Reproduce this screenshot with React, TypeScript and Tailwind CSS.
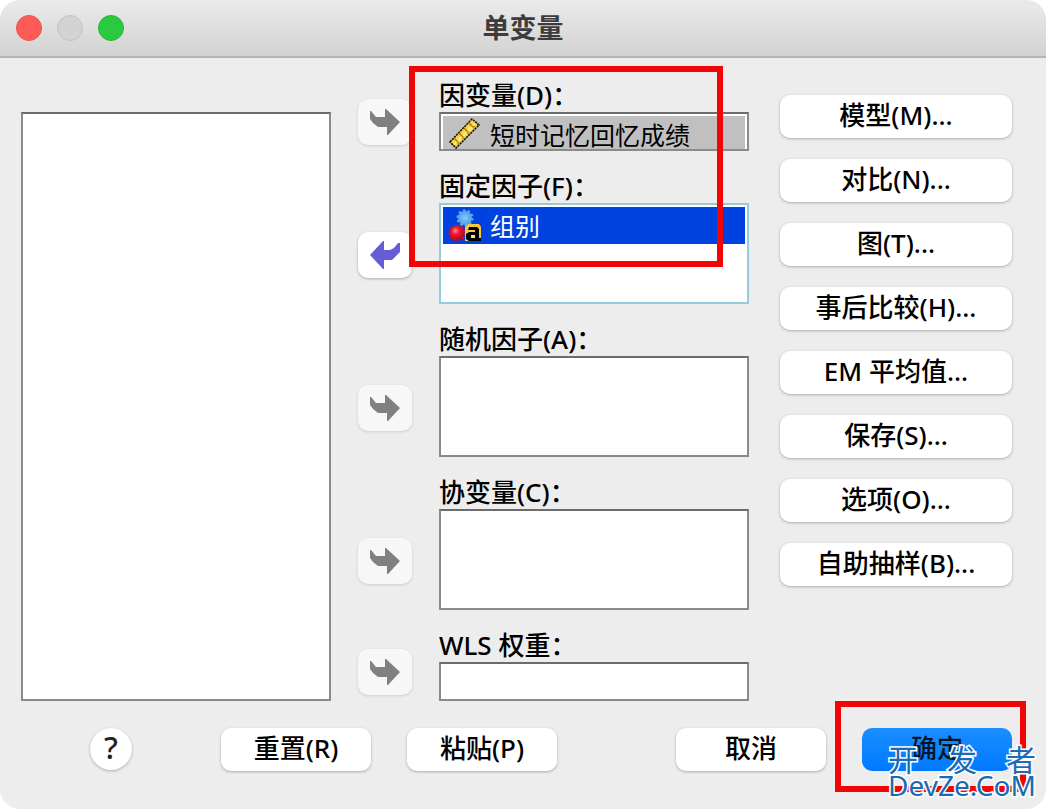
import type { ReactNode } from 'react';

const pushButton =
  'rounded-[10px] bg-white text-[26px] font-medium leading-8 text-black shadow-[0_1px_3px_rgba(0,0,0,0.28)]';
const field = 'border-2 border-[#8a8a8a] border-t-[#6c6c6c] bg-white outline-none';

function TransferButton({ label, active = false, low = false }: { label: string; active?: boolean; low?: boolean }) {
  return (
    <button
      type="button"
      aria-label={label}
      disabled={!active}
      className={`flex h-[46px] w-[54px] shrink-0 items-center justify-center self-end rounded-[10px] ${
        active ? 'bg-white shadow-[0_1px_3px_rgba(0,0,0,0.28)]' : 'bg-[#f7f7f7] shadow-[0_1px_3px_rgba(0,0,0,0.14)]'
      } ${low ? 'mb-[6px]' : 'mb-[26px]'}`}
    >
      {active ? (
        <svg width="30" height="28" viewBox="0 0 30 28" fill="#665cd6" aria-hidden="true">
          <path d="M0 14 13 0H14V9H20L24 7 28 2H30V11L25 16 22 19H14V28H13Z" />
        </svg>
      ) : (
        <svg width="30" height="26" viewBox="0 0 30 26" fill="#808080" aria-hidden="true">
          <path d="M0 2H1L6 8H15V0H16L30 13 18 26H17V18H8L3 14 0 10Z" />
        </svg>
      )}
    </button>
  );
}

function RulerIcon() {
  return (
    <svg width="34" height="34" viewBox="0 0 34 34" className="shrink-0" aria-hidden="true">
      <path d="M2 26 24 3 31 9 8 32Z" fill="#fad54a" stroke="#191500" strokeWidth="1.6" strokeDasharray="2.2 0.8" />
      <path d="M7 28 27 8" stroke="#ffee96" strokeWidth="2" />
      <path d="M6 22 10 26M11 17 15 21M16 12 20 16M21 7 25 11" stroke="#a87a10" strokeWidth="1.5" />
      <path d="M9 28 11 26M14 23 16 21M19 18 21 16M25 12 27 10" stroke="#d49a17" strokeWidth="2" />
    </svg>
  );
}

function NominalIcon() {
  return (
    <svg width="34" height="34" viewBox="0 0 34 34" className="shrink-0" aria-hidden="true">
      <defs>
        <radialGradient id="redBall" cx="0.4" cy="0.35" r="0.65">
          <stop offset="0" stopColor="#ff8585" />
          <stop offset="0.4" stopColor="#ed1932" />
          <stop offset="1" stopColor="#b00020" />
        </radialGradient>
        <radialGradient id="blueBall">
          <stop offset="0" stopColor="#8bc8fa" />
          <stop offset="1" stopColor="#4c9ceb" />
        </radialGradient>
      </defs>
      <circle cx="17" cy="9" r="7" fill="url(#blueBall)" stroke="#5da9f0" strokeWidth="3" strokeDasharray="2.4 2" />
      <circle cx="9" cy="24" r="7.5" fill="url(#redBall)" stroke="#c31338" strokeWidth="2" strokeDasharray="2.4 2" />
      <path d="M20 15H31L33 18V32H17V18Z" fill="#f5c842" />
      <path
        d="M21 18H29L31 20V29H33V32H21L18 30V25L21 23H27V21H20Z"
        fill="#000"
      />
      <path d="M23 26H27V29H23Z" fill="#ffe27a" />
    </svg>
  );
}

function Row({
  id,
  label,
  arrow,
  low,
  active,
  children,
}: {
  id: string;
  label: string;
  arrow: string;
  low?: boolean;
  active?: boolean;
  children: ReactNode;
}) {
  return (
    <div className="flex gap-[27px]">
      <TransferButton label={arrow} low={low} active={active} />
      <div className="flex min-w-0 flex-1 flex-col">
        <label htmlFor={id} className="h-9 whitespace-nowrap text-[26px] font-medium leading-[38px]">
          {label}
        </label>
        {children}
      </div>
    </div>
  );
}

const sideButtons = ['模型(M)...', '对比(N)...', '图(T)...', '事后比较(H)...', 'EM 平均值...', '保存(S)...', '选项(O)...', '自助抽样(B)...'];

export default function App() {
  return (
    <div className="bg-white font-['Noto_Sans','Noto_Sans_CJK_SC',sans-serif] text-black">
      <div className="relative min-h-screen overflow-hidden rounded-[20px] bg-[#ededed]">
        <header className="relative flex h-[58px] items-center justify-center border-b-2 border-[#b5b5b5] bg-linear-to-b from-[#ebebeb] to-[#d2d2d2]">
          <div className="absolute left-4 flex gap-[15px]">
            <button type="button" aria-label="关闭" className="size-[26px] rounded-full border border-[#e9544c] bg-[#ff5b56]" />
            <button type="button" aria-label="最小化" disabled className="size-[26px] rounded-full border border-[#c2c2c2] bg-[#d3d3d3]" />
            <button type="button" aria-label="缩放" className="size-[26px] rounded-full border border-[#25b637] bg-[#29c940]" />
          </div>
          <h1 className="text-[27px] font-bold leading-9 text-[#3c3c3c]">单变量</h1>
        </header>

        <main className="flex px-[21px] pr-[34px] pt-[18px]">
          <div className="flex min-w-0 flex-[1_1_0px] pt-9">
            <div role="listbox" aria-label="变量" tabIndex={0} className={`flex-1 ${field}`} />
          </div>

          <div className="relative ml-[27px] flex min-w-0 flex-[1_1_81px] flex-col gap-4">
            <Row id="dependent" label="因变量(D)：" arrow="移动到因变量" low>
              <div id="dependent" role="listbox" tabIndex={0} className={`h-[39px] px-[2px] pt-[2px] ${field}`}>
                <div role="option" aria-selected="false" className="flex h-full items-center gap-2 bg-[#c0c0c0] pl-[5px] text-[25px] leading-7">
                  <RulerIcon />
                  <span className="whitespace-nowrap pt-1">短时记忆回忆成绩</span>
                </div>
              </div>
            </Row>
            <Row id="fixed" label="固定因子(F)：" arrow="移出固定因子" active>
              <div id="fixed" role="listbox" tabIndex={0} className="h-[101px] border-2 border-[#95cbe0] bg-white p-[2px] outline-none">
                <div role="option" aria-selected="true" className="flex h-[37px] items-center gap-2 bg-[#0042df] pl-[5px] text-[25px] leading-7 text-white">
                  <NominalIcon />
                  <span className="whitespace-nowrap">组别</span>
                </div>
              </div>
            </Row>
            <Row id="random" label="随机因子(A)：" arrow="移动到随机因子">
              <div id="random" role="listbox" tabIndex={0} className={`h-[101px] ${field}`} />
            </Row>
            <Row id="covariate" label="协变量(C)：" arrow="移动到协变量">
              <div id="covariate" role="listbox" tabIndex={0} className={`h-[101px] ${field}`} />
            </Row>
            <Row id="wls" label="WLS 权重：" arrow="移动到 WLS 权重" low>
              <input id="wls" type="text" className={`h-[39px] w-full px-2 text-[25px] ${field}`} />
            </Row>
            <div className="pointer-events-none absolute -top-[10px] left-[51px] right-[26px] h-[201px] border-6 border-[#f20505]" />
          </div>

          <div className="ml-[31px] flex w-[232px] shrink-0 flex-col gap-[21px] pt-[19px]">
            {sideButtons.map((text) => (
              <button key={text} type="button" className={`h-[43px] pb-1 ${pushButton}`}>
                {text}
              </button>
            ))}
          </div>
        </main>

        <footer className="flex pb-[38px] pl-[90px] pr-[34px] pt-[27px]">
          <button type="button" aria-label="帮助" className="flex size-[42px] items-center justify-center rounded-full bg-white pb-1 text-[31px] font-medium leading-9 text-[#222] shadow-[0_1px_3px_rgba(0,0,0,0.28)]">
            ?
          </button>
          <button type="button" className={`ml-[89px] h-[43px] w-[150px] pb-1 ${pushButton}`}>重置(R)</button>
          <button type="button" className={`ml-9 h-[43px] w-[150px] pb-1 ${pushButton}`}>粘贴(P)</button>
          <button type="button" className={`ml-auto h-[43px] w-[150px] pb-1 ${pushButton}`}>取消</button>
          <div className="relative ml-9">
            <button type="button" className="h-[43px] w-[150px] rounded-[10px] bg-linear-to-b from-[#1a8fff] to-[#0079ff] pb-1 text-[26px] font-medium leading-8 text-[#06142a]">
              确定
            </button>
            <div className="pointer-events-none absolute -left-[27px] -right-[14px] -top-[27px] h-[91px] border-6 border-[#f20505]" />
            <div className="pointer-events-none absolute -right-[24px] top-[18px] w-[148px] text-[#1a6ab5] [paint-order:stroke_fill] [-webkit-text-stroke:3px_white]">
              <div className="flex justify-between text-[30px] leading-7">
                <span>开</span>
                <span>发</span>
                <span>者</span>
              </div>
              <div className="text-[28px] leading-[22px]">DevZe.CoM</div>
            </div>
          </div>
        </footer>
      </div>
    </div>
  );
}
